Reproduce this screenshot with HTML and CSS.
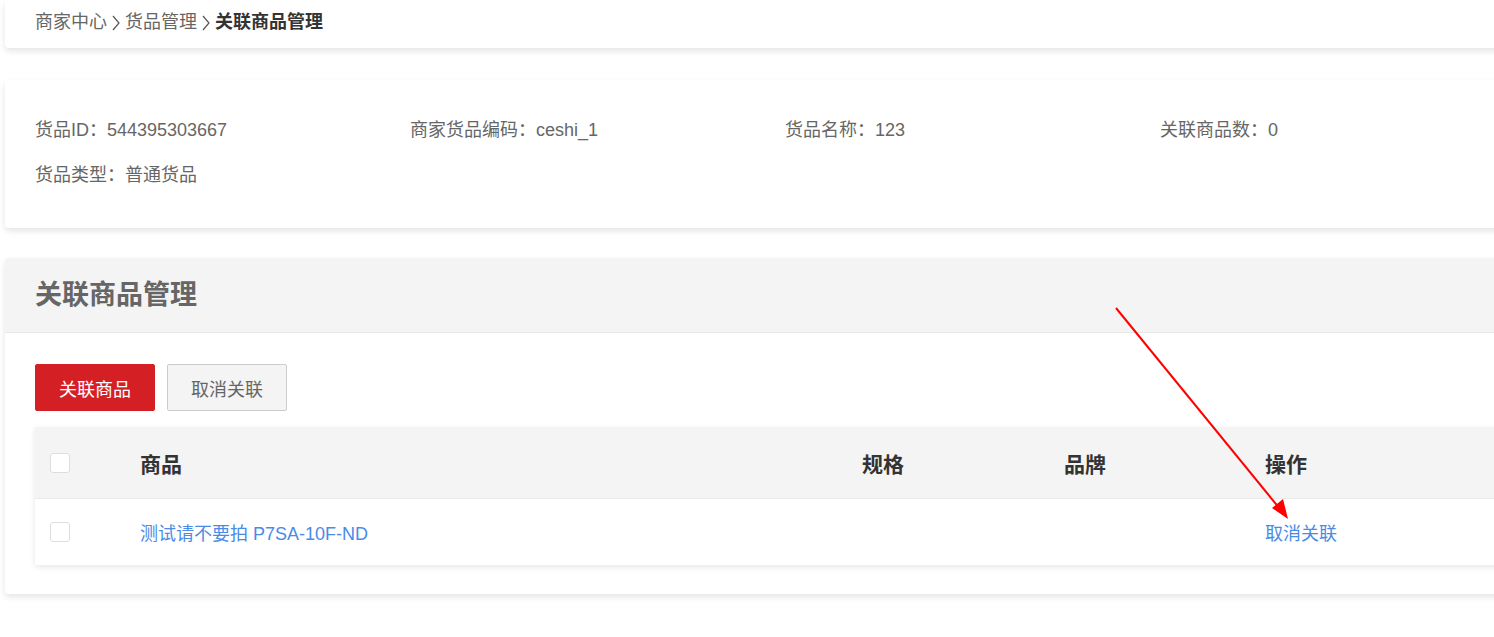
FILE: index.html
```html
<!DOCTYPE html>
<html lang="zh-CN">
<head>
  <meta charset="UTF-8" />
  <title>关联商品管理</title>
  <link rel="stylesheet" href="styles.css">
</head>
<body>
  <!-- 面包屑 -->
  <div class="card crumbs">
    <span>商家中心</span>
    <svg class="sep" viewBox="0 0 8 16"><path d="M1 1l6 7-6 7" fill="none" stroke="#555" stroke-width="1.2"/></svg>
    <span>货品管理</span>
    <svg class="sep" viewBox="0 0 8 16"><path d="M1 1l6 7-6 7" fill="none" stroke="#555" stroke-width="1.2"/></svg>
    <b>关联商品管理</b>
  </div>

  <!-- 货品信息 -->
  <div class="card info">
    <div>货品ID：544395303667</div>
    <div>商家货品编码：ceshi_1</div>
    <div>货品名称：123</div>
    <div>关联商品数：0</div>
    <div>货品类型：普通货品</div>
  </div>

  <!-- 关联商品列表 -->
  <div class="card panel">
    <div class="panel-head">关联商品管理</div>
    <div class="panel-body">
      <div class="toolbar">
        <button class="btn btn-red">关联商品</button>
        <button class="btn btn-gray">取消关联</button>
      </div>
      <div class="table">
        <div class="tr th">
          <div class="td"><span class="check"></span></div>
          <div class="td">商品</div>
          <div class="td">规格</div>
          <div class="td">品牌</div>
          <div class="td">操作</div>
        </div>
        <div class="tr">
          <div class="td"><span class="check"></span></div>
          <div class="td"><a class="link">测试请不要拍 P7SA-10F-ND</a></div>
          <div class="td"></div>
          <div class="td"></div>
          <div class="td"><a class="link">取消关联</a></div>
        </div>
      </div>
    </div>
  </div>

  <!-- 标注箭头 -->
  <svg class="mark" width="1494" height="637" viewBox="0 0 1494 637">
    <line x1="1116" y1="308" x2="1280" y2="509" stroke="#ff0000" stroke-width="2"/>
    <polygon points="1288,519 1272,508 1283,499" fill="#ff0000"/>
  </svg>
</body>
</html>
```

FILE: styles.css
```css
body {
  margin: 0;
  padding: 0 0 20px 5px;
  background: #fff;
  font-family: "Liberation Sans", "Noto Sans CJK SC", sans-serif;
  color: #666;
  overflow: hidden;
  position: relative;
}

.card {
  width: 1570px;
  background: #fff;
  border-radius: 4px;
  box-shadow: 0 3px 6px rgba(0, 0, 0, 0.11);
  box-sizing: border-box;
}

/* 面包屑 */
.crumbs {
  height: 48px;
  padding: 9px 30px 0;
  display: flex;
  align-items: flex-start;
  font-size: 18px;
  line-height: 26px;
}
.crumbs b {
  color: #333;
  font-weight: bold;
}
.crumbs .sep {
  width: 8px;
  height: 16px;
  margin: 6px 5px 0 5px;
}

/* 货品信息 */
.info {
  margin-top: 32px;
  padding: 37px 30px 40px;
  display: grid;
  grid-template-columns: repeat(4, 375px);
  row-gap: 19px;
  font-size: 18px;
  line-height: 26px;
}

/* 关联商品 */
.panel {
  margin-top: 30px;
}
.panel-head {
  height: 74px;
  background: #f4f4f4;
  border-bottom: 1px solid #e8e8e8;
  border-radius: 4px 4px 0 0;
  padding: 0 30px;
  font-size: 27px;
  font-weight: bold;
  line-height: 74px;
  color: #666;
}
.panel-body {
  padding: 31px 30px 29px;
}

.toolbar {
  display: flex;
  gap: 12px;
  margin-bottom: 16px;
}
.btn {
  width: 120px;
  height: 47px;
  border-radius: 2px;
  font-family: inherit;
  font-size: 18px;
  cursor: pointer;
}
.btn-red {
  background: #d42024;
  border: 1px solid #d42024;
  color: #fff;
}
.btn-gray {
  background: #f4f4f4;
  border: 1px solid #ccc;
  color: #666;
}

.table {
  box-shadow: 0 2px 6px rgba(0, 0, 0, 0.1);
}
.tr {
  display: grid;
  grid-template-columns: 105px 722px 202px 201px 1fr;
  height: 66px;
  align-items: center;
  background: #fff;
}
.tr.th {
  height: 71px;
  background: #f4f4f4;
  border-bottom: 1px solid #ebebeb;
  font-size: 21px;
  font-weight: bold;
  color: #333;
}
.td:first-child {
  padding-left: 15px;
  display: flex;
}
.check {
  width: 18px;
  height: 18px;
  border: 1px solid #ddd;
  border-radius: 3px;
  background: #fff;
}
.link {
  color: #4a8be6;
  font-size: 18px;
  cursor: pointer;
}

/* 标注 */
.mark {
  position: absolute;
  top: 0;
  left: 0;
  pointer-events: none;
}
```
